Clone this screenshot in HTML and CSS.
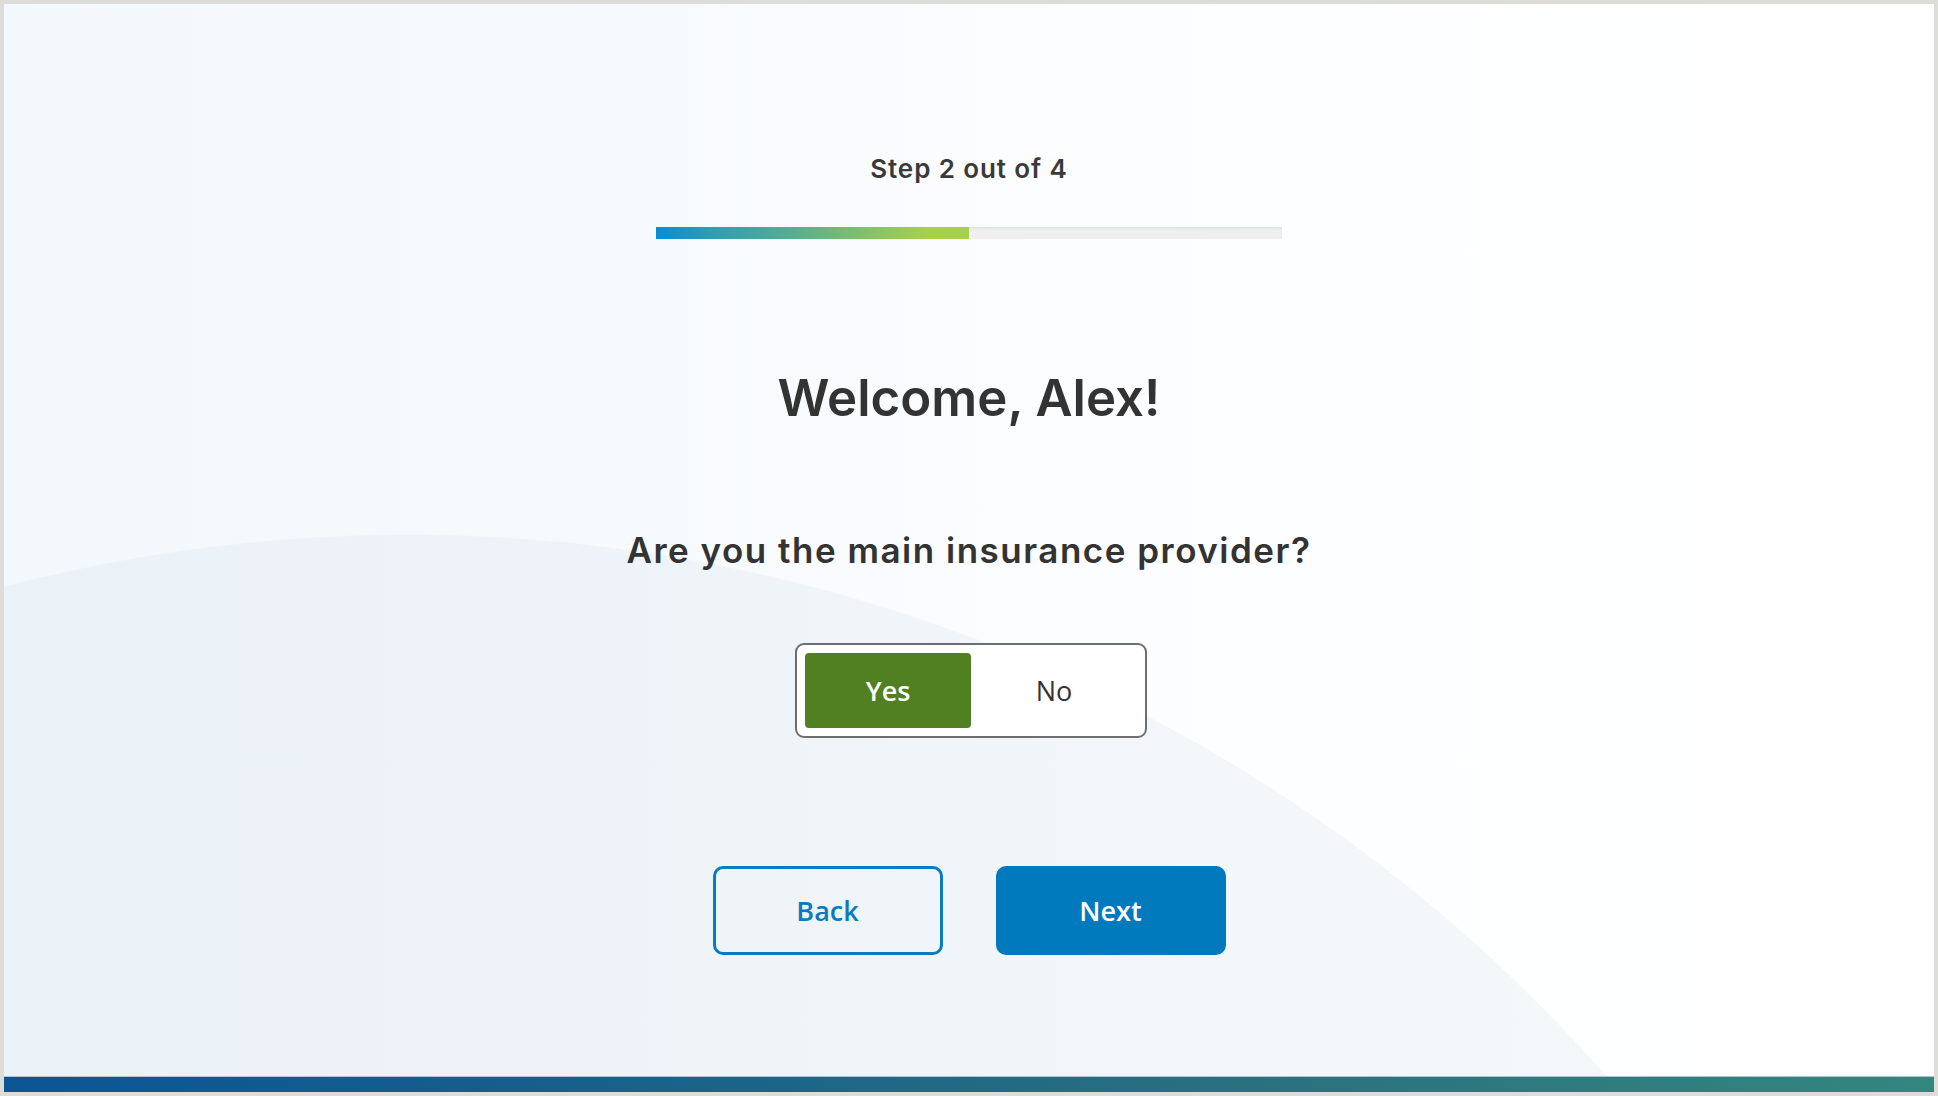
FILE: index.html
```html
<!DOCTYPE html>
<html lang="en">
<head>
<meta charset="utf-8">
<title>Step 2 out of 4</title>
<link rel="stylesheet" href="styles.css">
</head>
<body>
<div class="frame">
  <main class="content">
    <p class="step">Step 2 out of 4</p>
    <div class="progress"><div class="progress-fill" style="width:50%"></div></div>
    <h1 class="title">Welcome, Alex!</h1>
    <h2 class="question">Are you the main insurance provider?</h2>
    <div class="toggle" role="radiogroup">
      <button class="toggle-opt is-active" type="button">Yes</button>
      <button class="toggle-opt" type="button">No</button>
    </div>
    <div class="actions">
      <button class="btn btn-outline" type="button">Back</button>
      <button class="btn btn-primary" type="button">Next</button>
    </div>
  </main>
  <div class="footer-bar"></div>
</div>
</body>
</html>
```

FILE: styles.css
```css
* { box-sizing: border-box; }
html, body { margin: 0; padding: 0; }
body {
  width: 1938px;
  height: 1096px;
  overflow: hidden;
  background: #dcdcd8;
}
.frame {
  width: 1938px;
  height: 1096px;
  border: 4px solid #dcdcd8;
  display: flex;
  flex-direction: column;
  background:
    radial-gradient(circle 1598px at 404px 2128px, rgba(206, 220, 232, 0.22) 99.9%, rgba(206, 220, 232, 0) 100%),
    linear-gradient(90deg, #f3f8fc 0%, #f7fafd 35%, #fdfeff 65%, #ffffff 100%);
}
.content {
  flex: 1;
  display: flex;
  flex-direction: column;
  align-items: center;
  padding-top: 149px;
  font-family: "Inter", "Lato", sans-serif;
  color: #333333;
}
.step {
  margin: 0;
  font-size: 26px;
  line-height: 32px;
  letter-spacing: 0.9px;
  font-weight: 600;
  color: #3a3a3a;
}
.progress {
  margin-top: 42px;
  width: 626px;
  height: 12px;
  background: #efefef;
  box-shadow: inset 0 2px 2px rgba(0, 0, 0, 0.05);
}
.progress-fill {
  height: 100%;
  background: linear-gradient(90deg, #0a8bd9 0%, #2f9db4 18%, #52ad92 42%, #84c266 68%, #a5d04b 86%, #a8d14a 100%);
}
.title {
  margin: 129px 0 0;
  font-size: 51px;
  line-height: 60px;
  font-weight: 600;
  color: #333333;
}
.question {
  margin: 101px 0 0;
  font-size: 35px;
  line-height: 42px;
  letter-spacing: 1.5px;
  font-weight: 600;
  color: #333333;
}
.toggle {
  margin-top: 72px;
  margin-left: 4px;
  display: grid;
  grid-template-columns: 166px 166px;
  padding: 8px;
  border: 2px solid #6e6e6e;
  border-radius: 9px;
  background: #ffffff;
}
.toggle-opt {
  height: 75px;
  border: 0;
  border-radius: 4px;
  background: transparent;
  font-family: "Open Sans", "Noto Sans", sans-serif;
  font-size: 27px;
  font-weight: 400;
  color: #333333;
  cursor: pointer;
}
.toggle-opt.is-active {
  background: #508021;
  color: #ffffff;
  font-weight: 600;
}
.actions {
  margin-top: 128px;
  display: flex;
  gap: 53px;
}
.btn {
  width: 230px;
  height: 89px;
  border-radius: 10px;
  font-family: "Open Sans", "Noto Sans", sans-serif;
  font-size: 27px;
  font-weight: 600;
  cursor: pointer;
}
.btn-outline {
  background: transparent;
  border: 3px solid #0a7bbf;
  color: #0a7bbf;
}
.btn-primary {
  background: #0079bd;
  border: 3px solid #0079bd;
  color: #ffffff;
}
.footer-bar {
  height: 16px;
  border-top: 1px solid #b4c3cf;
  background: linear-gradient(90deg, #0b5595 0%, #17608a 30%, #2a717f 65%, #33877f 100%);
}
```
